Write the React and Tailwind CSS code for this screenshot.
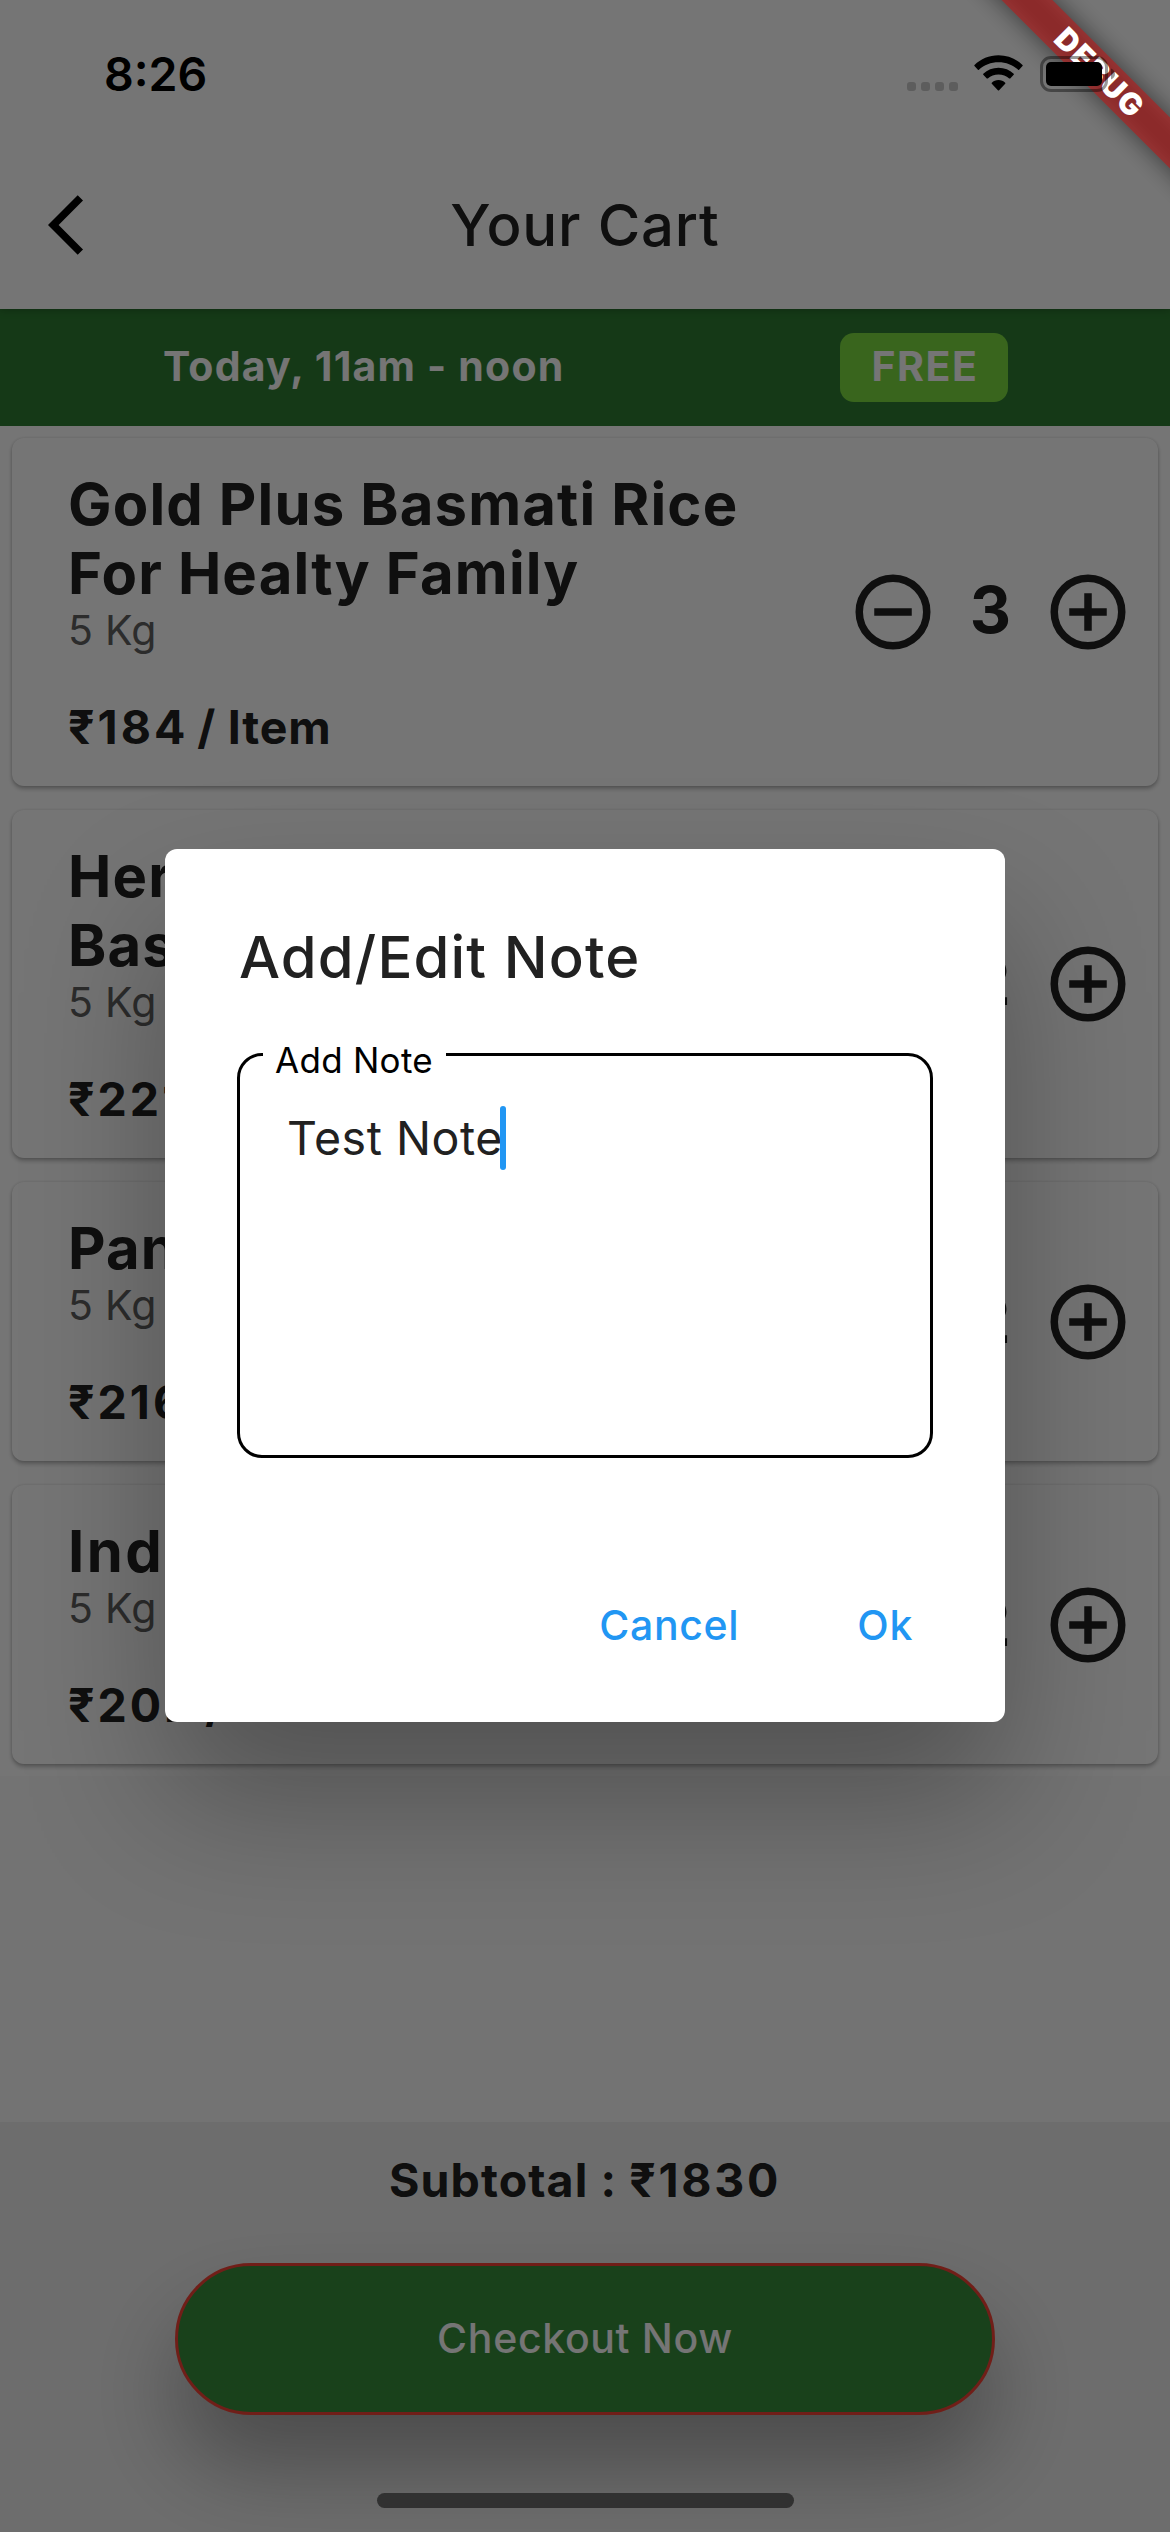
const items = [
  { name: "Gold Plus Basmati Rice\nFor Healty Family", tracking: "tracking-[1.15px]", weight: "5 Kg", price: 184, qty: 3 },
  { name: "Heritage Premium\nBasmati Rice", tracking: "tracking-[1.15px]", weight: "5 Kg", price: 221, qty: 2 },
  { name: "Pansari Rice", tracking: "tracking-[1.15px]", weight: "5 Kg", price: 216, qty: 2 },
  { name: "India Gate Rice", tracking: "tracking-[2.4px]", weight: "5 Kg", price: 202, qty: 2 },
];

function BackIcon() {
  return (
    <svg viewBox="0 0 24 24" className="ml-12 size-[72px]" fill="#000">
      <path d="M11.67 3.87L9.9 2.1 0 12l9.9 9.9 1.77-1.77L3.54 12z" />
    </svg>
  );
}

function CircleIcon({ plus }) {
  return (
    <svg viewBox="0 0 24 24" className="size-[90px]" fill="none" stroke="#212121" strokeWidth="2">
      <circle cx="12" cy="12" r="9" />
      <path d={plus ? "M7 12h10M12 7v10" : "M7 12h10"} />
    </svg>
  );
}

function CartItem({ item }) {
  return (
    <div className="flex items-center justify-between rounded-[12px] bg-white pr-[25px] shadow-[0_3px_4px_rgba(0,0,0,0.26),0_0_3px_rgba(0,0,0,0.14)]">
      <div className="flex flex-col pt-[32px] pb-[31px] pl-[56px]">
        <p className={`text-[58px] leading-[69px] font-bold whitespace-pre text-[#212121] ${item.tracking}`}>{item.name}</p>
        <p className="text-[41px] leading-[45px] tracking-[0.3px] text-[#616161]">{item.weight}</p>
        <p className="mt-[46px] text-[46.5px] leading-[56px] font-[650] tracking-[0.8px] whitespace-pre text-[#212121]">
          <span className="tracking-[3px]">₹{item.price}</span>
          <span className="-ml-[3px]"> / Item</span>
        </p>
      </div>
      <div className="flex items-center">
        <CircleIcon />
        <span className="w-[105px] pb-[4px] text-center text-[64px] leading-[70px] font-bold text-[#212121]">
          {item.qty}
        </span>
        <CircleIcon plus />
      </div>
    </div>
  );
}

function CartPage() {
  return (
    <div className="flex h-full flex-col bg-[#fafafa]">
      <header className="relative z-10 bg-white pt-[141px] shadow-[0_1px_8px_rgba(0,0,0,0.25)]">
        <div className="grid h-[168px] grid-cols-[200px_1fr_200px] items-center">
          <BackIcon />
          <h1 className="text-center text-[58px] leading-[69px] font-medium tracking-[0.85px] text-[#212121]">Your Cart</h1>
        </div>
      </header>

      <div className="flex h-[117px] items-center justify-between bg-[#2e7d32] pr-[162px] pl-[163px] text-[41px] leading-[50px] font-bold text-white">
        <span className="pb-[3px] tracking-[1.19px]">Today, 11am - noon</span>
        <span className="flex h-[69px] w-[168px] items-center justify-center rounded-[14px] bg-[#7cdc41] pb-[3px] pl-[2px] tracking-[1.57px]">
          FREE
        </span>
      </div>

      <main className="flex flex-col gap-6 bg-white px-3 py-3">
        {items.map((item) => (
          <CartItem key={item.price} item={item} />
        ))}
      </main>

      <footer className="mt-auto flex h-[410px] flex-col items-center bg-[#eeeeee] pt-[30px]">
        <p className="text-[46.5px] leading-[56px] font-[650] tracking-[1.1px] text-[#212121]">
          Subtotal : <span className="tracking-[2.7px]">₹1830</span>
        </p>
        <button className="mt-[55px] h-[152px] w-[820px] rounded-full border-[3px] border-[#f44336] bg-[#388e3c] text-[41px] font-medium tracking-[0.66px] text-white shadow-[0_52px_88px_rgba(0,0,0,0.31)]">
          Checkout Now
        </button>
      </footer>
    </div>
  );
}

function NoteDialog() {
  return (
    <div className="h-[873px] w-[840px] rounded-[12px] bg-white pt-[74px] shadow-[0_76px_140px_rgba(0,0,0,0.3)]">
      <h2 className="pl-[74px] text-[58px] leading-[69px] font-medium tracking-[1.15px] text-[#212121]">Add/Edit Note</h2>
      <div className="relative mt-[61px] ml-[72px] flex h-[405px] w-[696px] items-start rounded-[25px] border-[3px] border-black pt-[50px] pl-[47px]">
        <span className="absolute -top-[16px] left-[23px] w-[183px] bg-white pl-[12px] text-[35px] leading-[40px] tracking-[0.28px] text-black">
          Add Note
        </span>
        <span className="text-[46.5px] leading-[65px] tracking-[0.54px] text-[#212121]">Test Note</span>
        <span className="-ml-[3px] h-[64px] w-[6px] rounded-full bg-[#2196f3]" />
      </div>
      <div className="mt-[139px] flex justify-end gap-[118px] pr-[92px] text-[41px] leading-[56px] font-medium tracking-[0.66px] text-[#2196f3]">
        <button>Cancel</button>
        <button>Ok</button>
      </div>
    </div>
  );
}

function DebugRibbon() {
  return (
    <div className="absolute inset-0 overflow-hidden">
      <div className="absolute top-[53.5px] -right-[128.5px] h-[36px] w-[400px] rotate-45 bg-black/50 blur-[12px]" />
      <div className="absolute top-[53.5px] -right-[128.5px] flex h-[36px] w-[400px] rotate-45 items-center justify-center bg-[#b71c1c]/63 pl-[2px] text-[30.5px] leading-[36px] font-black tracking-[1.2px] text-white">
        DEBUG
      </div>
    </div>
  );
}

function StatusBar() {
  return (
    <div className="absolute inset-x-0 top-0 flex items-start justify-between pr-[55px] pl-[104px]">
      <span className="pt-[46px] text-[46.5px] leading-[56px] font-semibold text-black">8:26</span>
      <div className="flex items-start">
        <div className="mt-[82px] flex gap-[5px]">
          <i className="size-[9px] rounded-[3px] bg-black/20" />
          <i className="size-[9px] rounded-[3px] bg-black/20" />
          <i className="size-[9px] rounded-[3px] bg-black/20" />
          <i className="size-[9px] rounded-[3px] bg-black/20" />
        </div>
        <svg viewBox="0 0 49 36" className="mt-[55px] ml-4 h-9 w-[49px]" fill="#000">
          <path d="M24.5 0.2C33.8 0.2 42.3 3.9 48.5 9.9Q49 10.4 48.5 10.9L45.1 14.7Q44.6 15.1 44.1 14.7C38.9 9.9 32 7.3 24.5 7.3S10.1 9.9 4.9 14.7Q4.4 15.1 3.9 14.7L0.5 10.9Q0 10.4 0.5 9.9C6.7 3.9 15.2 0.2 24.5 0.2z" />
          <path d="M24.5 12.7C30.4 12.7 35.7 14.9 39.7 18.7Q40.2 19.2 39.7 19.7L36.2 23.4Q35.7 23.8 35.2 23.4C32.3 20.8 28.6 19.5 24.5 19.5S16.7 20.8 13.8 23.4Q13.3 23.8 12.8 23.4L9.3 19.7Q8.8 19.2 9.3 18.7C13.3 14.9 18.6 12.7 24.5 12.7z" />
          <path d="M24.5 25C27.1 25 29.5 26 31.2 27.7Q31.7 28.2 31.2 28.7L25.1 35.2Q24.5 35.8 23.9 35.2L17.8 28.7Q17.3 28.2 17.8 27.7C19.5 26 21.9 25 24.5 25z" />
        </svg>
        <svg viewBox="0 0 75 36" className="mt-[56px] ml-[17px] h-9 w-[75px]">
          <rect x="1.5" y="1.5" width="65" height="33" rx="9.5" fill="none" stroke="#000" strokeOpacity="0.4" strokeWidth="3" />
          <rect x="6" y="6" width="56" height="24" rx="5" fill="#000" />
          <path d="M71 12.5C73.5 13.5 75 15.6 75 18S73.5 22.5 71 23.5z" fill="#000" fillOpacity="0.4" />
        </svg>
      </div>
    </div>
  );
}

export default function App() {
  return (
    <div className="relative h-[2532px] w-[1170px] overflow-hidden font-['Inter',sans-serif]">
      <CartPage />
      <div className="absolute inset-0 z-20 flex items-center justify-center bg-black/54 pt-[39px]">
        <NoteDialog />
        <DebugRibbon />
        <StatusBar />
        <div className="absolute bottom-6 left-[377px] h-[15px] w-[417px] rounded-full bg-[#313131]" />
      </div>
    </div>
  );
}
